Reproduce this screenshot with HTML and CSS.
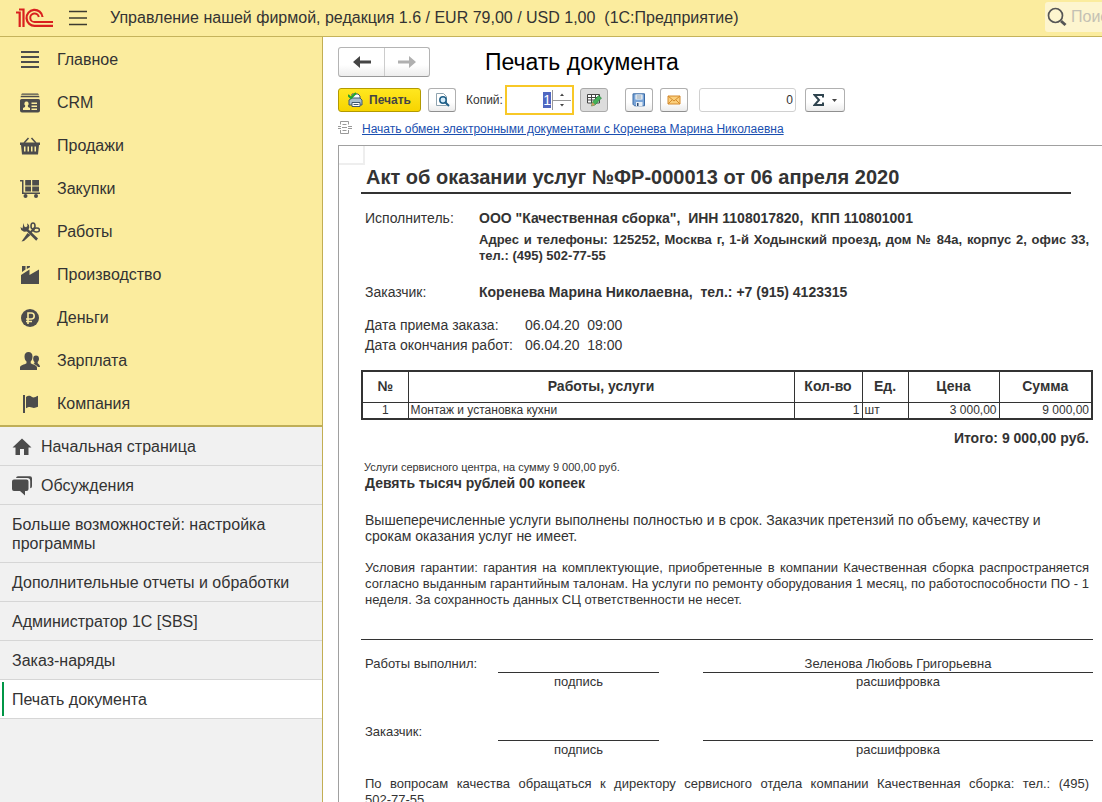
FILE: index.html
```html
<!DOCTYPE html>
<html lang="ru">
<head>
<meta charset="utf-8">
<title>Управление нашей фирмой</title>
<link rel="stylesheet" href="styles.css">
</head>
<body>
<header class="topbar">
  <svg class="logo" width="38" height="20" viewBox="0 0 38 20" fill="none" stroke="#d9201f" role="img" aria-label="1С">
    <path d="M0 4.500H3.700V19M3 1.500H7.500V19" stroke-width="2.200"/>
    <path d="M26.500 9A8 8 0 1 0 19 17.800H37" stroke-width="2.200"/>
    <path d="M22.800 9A4.300 4.300 0 1 0 19 14H37" stroke-width="2"/>
  </svg>
  <button class="menu-btn" aria-label="Меню"><svg width="18" height="16" viewBox="0 0 18 16" stroke="#3c3b30" stroke-width="1.300"><path d="M0 1.500H18M0 8H18M0 14.500H18"/></svg></button>
  <div class="app-title">Управление нашей фирмой, редакция 1.6 / EUR 79,00 / USD 1,00&nbsp; (1С:Предприятие)</div>
  <label class="search">
    <svg width="20" height="20" viewBox="0 0 20 20" fill="none" stroke="#555"><circle cx="8.500" cy="8.500" r="7" stroke-width="1.700"/><path d="M14 14l4.500 4" stroke-width="3"/></svg>
    <input type="text" placeholder="Поиск (Ctrl+Shift+F)" aria-label="Поиск">
  </label>
</header>
<div class="body">
  <aside class="sidebar">
    <nav class="sections">
      <a href="#"><svg viewBox="0 0 20 20"><path d="M1 1h18v2H1zM1 6h18v2H1zM1 11h18v2H1zM1 16h18v2H1z"/></svg>Главное</a>
      <a href="#"><svg viewBox="0 0 20 20"><path d="M2 .5h16l1 1.200H1zM1 2.800h18l.5 1.500H.5z"/><path fill-rule="evenodd" d="M1.500 6h17A1.500 1.500 0 0 1 20 7.500v10a2 2 0 0 1-2 2H2a2 2 0 0 1-2-2v-10A1.500 1.500 0 0 1 1.500 6zM6.500 8.500a2 2.200 0 0 0-1.300 4L5 14l-2 1v2h7v-2l-2-1-.2-1.500a2 2.200 0 0 0-1.300-4zM11.500 9.500V11H17V9.500zM11.500 12.500V14H17v-1.500zM11.500 15.500V17H17v-1.500z"/></svg>CRM</a>
      <a href="#"><svg viewBox="0 0 20 20"><path d="M0 6.500h20V9H0z"/><path d="M4 7L8.500 2M16 7l-4.500-5" fill="none" stroke="#4c4c4c" stroke-width="1.500"/><path fill-rule="evenodd" d="M1 9h18l-1 9.500H2zM4 10.500v5h1.500v-5zM7.500 10.500v5H9v-5zM11 10.500v5h1.500v-5zM14.500 10.500v5H16v-5z"/></svg>Продажи</a>
      <a href="#"><svg viewBox="0 0 20 20"><path d="M0 1h3.500v12.500H20V15H2V2.500H0zM5.200 1H11v5.500H5.200zM12.200 1H19v5.500h-6.800zM5.200 7.500H11v5H5.200zM12.200 7.500H19v5h-6.800z"/><circle cx="5.500" cy="17" r="2"/><circle cx="16" cy="17" r="2"/></svg>Закупки</a>
      <a href="#"><svg viewBox="0 0 20 20"><path d="M3.500 1l.8 3.500 1.700.7L7.500 4 7 1.200 9 3l.3 2.500-.8 2 9.500 8.900-1.800 2.400L7 9.500l-3 .3L1.200 8 .5 5l2 1.500"/><path d="M7.500 11l3 2L4 19l-2.500.5z"/><g fill="none" stroke="#4c4c4c" stroke-width="1.600"><ellipse cx="13" cy="4" rx="2" ry="3"/><ellipse cx="16.500" cy="8" rx="3" ry="2"/><path d="M15 5.500L10 11" stroke-width="2"/></g></svg>Работы</a>
      <a href="#"><svg viewBox="0 0 20 20"><path d="M1 19v-9L9.500 4.500V10L19 4.500V19z"/><path d="M2 1h3.500v3.500L2 7zM6.800 1H10v1.200L6.800 4z"/></svg>Производство</a>
      <a href="#"><svg viewBox="0 0 20 20"><circle cx="10" cy="10" r="9"/><path d="M8 16V5h3.200a3 3 0 0 1 0 6H6M6 13.500h6" fill="none" stroke="#fbec9e" stroke-width="1.600"/></svg>Деньги</a>
      <a href="#"><svg viewBox="0 0 20 20"><path d="M8.500 1c2.500 0 4 1.700 4 4.500 0 2.500-1 4.300-1.800 5v1.700c2 1.500 6.300 1.800 6.300 4.300V19H0v-2.500c0-2.500 4.500-2.800 6.500-4.300v-1.700c-1-.7-2-2.500-2-5C4.500 2.700 6 1 8.500 1z"/><path d="M16 4.500c2 0 3 1.200 3 3.300 0 1.700-.8 2.700-1.300 3.200v1.300c1 1 2.300 1.700 2.300 3.700h-2c-1-1.700-2.600-2-4.500-3.200 1-.5 1-1 1-1.800-.7-.5-1.300-1.500-1.300-3.200 0-2.100.8-3.300 2.800-3.300z"/></svg>Зарплата</a>
      <a href="#"><svg viewBox="0 0 20 20"><path d="M3 1h2v18H3zM6 3c2.500-2 4.500-1 6 0s3.500 0 6-1.200v11c-2.500 1.200-4.500 1.500-6 .7s-3.500-1-6 .8z"/></svg>Компания</a>
    </nav>
    <nav class="windows">
      <a href="#"><svg viewBox="0 0 20 20"><path d="M10 1.500L0.500 10.500H3.500V18H8V12h4v6h4.500v-7.500h3z"/></svg>Начальная страница</a>
      <a href="#"><svg viewBox="0 0 20 20"><path d="M4 2A2 2 0 0 1 6 .3h12A2 2 0 0 1 20 2.300v8a2 2 0 0 1-1.800 2V5a3 3 0 0 0-3-3z"/><path d="M2 3.500h12.500a2 2 0 0 1 2 2v7.500a2 2 0 0 1-2 2H13v4.500L8 15H2a2 2 0 0 1-2-2V5.500a2 2 0 0 1 2-2z"/></svg>Обсуждения</a>
      <a href="#">Больше возможностей: настройка программы</a>
      <a href="#">Дополнительные отчеты и обработки</a>
      <a href="#">Администратор 1С [SBS]</a>
      <a href="#">Заказ-наряды</a>
      <a href="#" class="active" aria-current="page">Печать документа</a>
    </nav>
  </aside>
  <main class="content">
    <div class="heading">
      <div class="history">
        <button aria-label="Назад"><svg width="18" height="12" viewBox="0 0 18 12"><path d="M0 6l7-6v4.500h11v3H7V12z" fill="#444"/></svg></button>
        <button aria-label="Вперед"><svg width="18" height="12" viewBox="0 0 18 12"><path d="M18 6l-7-6v4.500H0v3h11V12z" fill="#b0b0b0"/></svg></button>
      </div>
      <h1>Печать документа</h1>
    </div>
    <div class="toolbar">
      <button class="btn print"><svg width="15" height="16" viewBox="0 0 15 16"><path d="M4 6V2h6l2 2v3" fill="#fff" stroke="#456" /><path d="M1 8l3-2h8l2 2v5H1z" fill="#a9bfd0" stroke="#3f5870"/><path d="M4 10.500h8v4H4z" fill="#fff" stroke="#3f5870"/><path d="M5.500 12.500h5" stroke="#3f5870"/><path d="M0 3l3 3 5-5" fill="none" stroke="#20a330" stroke-width="2"/></svg>Печать</button>
      <button class="btn preview" aria-label="Просмотр"><svg width="15" height="14" viewBox="0 0 15 14"><path d="M1.500.5h7l3 3v9h-10z" fill="#fff" stroke="#90a4b0"/><circle cx="8" cy="7" r="3.200" fill="#d5ecfa" stroke="#1f5f88" stroke-width="1.500"/><path d="M10.500 9.500l3.500 3.500" stroke="#1f5f88" stroke-width="2"/></svg></button>
      <label class="copies-label" for="copies">Копий:</label>
      <div class="copies">
        <input id="copies" type="text" value="1">
        <div class="spin"><button aria-label="Больше"><svg width="4" height="3"><path d="M0 3l2-2.500L4 3z" fill="#444"/></svg></button><button aria-label="Меньше"><svg width="4" height="3"><path d="M0 0l2 2.500L4 0z" fill="#444"/></svg></button></div>
      </div>
      <button class="btn edit" aria-label="Редактирование"><svg width="16" height="14" viewBox="0 0 16 14"><path d="M1 1.500h12v8.500H1z" fill="#fff"/><path d="M1.500 1.500h12v8.500h-12zM1 4.500h12M1 7h12M5.500 1.500V10M9.500 1.500V10" fill="none" stroke="#444"/><path d="M5.500 13l1-4L12.500 2.500 15.500 5 9 12z" fill="#43b058" stroke="#2b803c" stroke-width=".6"/><path d="M5.500 13l1-4L9 12z" fill="#d09a60"/></svg></button>
      <button class="btn save" aria-label="Сохранить"><svg width="14" height="14" viewBox="0 0 14 14"><path d="M1.500.8h11v12h-10l-1.500-1.500V.8z" fill="#7aa5d8" stroke="#3b6ba5"/><path d="M3.500 1.500h7v5h-7z" fill="#fff"/><path d="M4.500 3h5M4.500 5h5" stroke="#7d93a8"/><path d="M4 9h6.500v4H4z" fill="#e8eef5"/><path d="M5 10h1.500v3H5z" fill="#2d4c74"/></svg></button>
      <button class="btn mail" aria-label="Отправить"><svg width="14" height="10" viewBox="0 0 14 10"><path d="M1 1h12v8H1z" fill="#fbcf7c" stroke="#d48a2c"/><path d="M1 1l6 5 6-5M1 9l4-4M13 9L9 5" fill="none" stroke="#d48a2c"/></svg></button>
      <input class="sum-value" type="text" value="0" aria-label="Сумма">
      <button class="btn sum" aria-label="Сумма"><svg width="11" height="12" viewBox="0 0 11 12"><path d="M10 3.500V1H1.500l4.500 5-4.500 5H10V8.500" fill="none" stroke="#2f444f" stroke-width="2"/></svg><svg width="5" height="3"><path d="M0 0h5L2.500 3z" fill="#444"/></svg></button>
    </div>
    <div class="exchange">
      <svg width="14" height="13" viewBox="0 0 14 13" fill="none" stroke="#999"><path d="M2.500 3.500v-3h8v3M2.500 9v3.500h8V9M4.500 3.500h4M4 6.500h5M4.500 9.500h4M0 5.500h3M10 5.500h4M0 7.500h3M10 7.500h4"/></svg>
      <a href="#">Начать обмен электронными документами с Коренева Марина Николаевна</a>
    </div>
    <article class="sheet">
      <div class="corner"></div>
      <h2>Акт об оказании услуг №ФР-000013 от 06 апреля 2020</h2>
      <dl class="parties">
        <dt>Исполнитель:</dt>
        <dd>ООО "Качественная сборка",&nbsp; ИНН 1108017820,&nbsp; КПП 110801001
          <p>Адрес и телефоны: 125252, Москва г, 1-й Ходынский проезд, дом № 84а, корпус 2, офис 33, тел.: (495) 502-77-55</p></dd>
        <dt>Заказчик:</dt>
        <dd>Коренева Марина Николаевна,&nbsp; тел.: +7 (915) 4123315</dd>
      </dl>
      <dl class="dates">
        <dt>Дата приема заказа:</dt><dd>06.04.20&nbsp; 09:00</dd>
        <dt>Дата окончания работ:</dt><dd>06.04.20&nbsp; 18:00</dd>
      </dl>
      <table class="services">
        <colgroup><col class="c-num"><col><col class="c-qty"><col class="c-unit"><col class="c-price"><col class="c-total"></colgroup>
        <thead><tr><th>№</th><th>Работы, услуги</th><th>Кол-во</th><th>Ед.</th><th>Цена</th><th>Сумма</th></tr></thead>
        <tbody><tr><td class="center">1</td><td>Монтаж и установка кухни</td><td class="right">1</td><td>шт</td><td class="right">3 000,00</td><td class="right">9 000,00</td></tr></tbody>
      </table>
      <p class="total">Итого: 9 000,00 руб.</p>
      <p class="summary">Услуги сервисного центра, на сумму 9 000,00 руб.</p>
      <p class="words">Девять тысяч рублей 00 копеек</p>
      <p class="accept">Вышеперечисленные услуги выполнены полностью и в срок. Заказчик претензий по объему, качеству и срокам оказания услуг не имеет.</p>
      <p class="terms">Условия гарантии: гарантия на комплектующие, приобретенные в компании Качественная сборка распространяется согласно выданным гарантийным талонам. На услуги по ремонту оборудования 1 месяц, по работоспособности ПО - 1 неделя. За сохранность данных СЦ ответственности не несет.</p>
      <div class="signatures">
        <div class="sign"><span>Работы выполнил:</span><span class="line"></span><span class="line">Зеленова Любовь Григорьевна</span><small class="cap1">подпись</small><small class="cap2">расшифровка</small></div>
        <div class="sign"><span>Заказчик:</span><span class="line"></span><span class="line"></span><small class="cap1">подпись</small><small class="cap2">расшифровка</small></div>
      </div>
      <p class="terms">По вопросам качества обращаться к директору сервисного отдела компании Качественная сборка: тел.: (495) <span class="phone">502-77-55</span></p>
    </article>
  </main>
</div>
<script src="script.js"></script>
</body>
</html>
```

FILE: styles.css
```css
* { box-sizing: border-box; }
body {
  margin: 0;
  height: 100vh;
  display: flex;
  flex-direction: column;
  overflow: hidden;
  background: #fff;
  color: #333;
  font-family: "Liberation Sans", Arial, sans-serif;
  font-size: 16px;
}
button, input { font-family: inherit; color: inherit; }
svg { display: block; flex: none; }
h1, h2, p, dl, dd { margin: 0; }
a { color: inherit; text-decoration: none; }

.topbar {
  flex: none;
  display: flex;
  align-items: center;
  height: 37px;
  padding-left: 16px;
  background: #fbec9e;
  border-bottom: 1px solid #c5b35b;
}
.menu-btn { margin-left: 15px; padding: 0; border: 0; background: none; }
.app-title { flex: 1; margin-left: 23px; white-space: nowrap; overflow: hidden; }
.search {
  display: flex;
  align-items: center;
  gap: 4px;
  width: 57px;
  height: 30px;
  margin-bottom: 2px;
  padding-left: 2px;
  background: #fdf5cf;
  border-radius: 3px 0 0 3px;
}
.search input {
  flex: 1;
  min-width: 0;
  padding: 0;
  border: 0;
  outline: 0;
  background: none;
  font-size: 16px;
}
.search input::placeholder { color: #c4c1b4; }

.body { flex: 1; min-height: 0; display: flex; }
.sidebar {
  flex: none;
  width: 323px;
  background: #f1f1f1;
  border-right: 1px solid #c2ae54;
}
.sections { padding-top: 1px; background: #fbec9e; border-bottom: 2px solid #bfae57; }
.sections a {
  display: flex;
  align-items: center;
  gap: 17px;
  height: 43px;
  padding-left: 20px;
}
.sidebar svg { width: 20px; height: 20px; margin: -1px 0; fill: #4c4c4c; }
.windows a {
  display: flex;
  align-items: center;
  gap: 9px;
  min-height: 39px;
  padding: 10px 20px 9px 12px;
  line-height: 19px;
  border-bottom: 1px solid #d6d6d6;
}
.windows a.active { background: linear-gradient(#009646, #009646) 2px center / 2px 34px no-repeat #fff; }

.content { flex: 1; min-width: 0; padding: 10px 0 0 15px; display: flex; flex-direction: column; }
.heading { display: flex; align-items: center; gap: 55px; height: 30px; }
.history {
  display: flex;
  height: 30px;
  border: 1px solid #b4b4b4;
  border-bottom-color: #999;
  border-radius: 3px;
  background: linear-gradient(#fff 60%, #ededed);
}
.history button {
  display: flex;
  align-items: center;
  justify-content: center;
  width: 45px;
  padding: 0;
  border: 0;
  background: none;
}
.history button + button { border-left: 1px solid #ccc; }
h1 { font-size: 23px; font-weight: 400; line-height: 30px; color: #000; }

.toolbar { display: flex; align-items: center; height: 30px; margin-top: 8px; font-size: 12px; }
.btn {
  display: flex;
  align-items: center;
  justify-content: center;
  flex: none;
  width: 28px;
  height: 24px;
  padding: 0;
  border: 1px solid #b0b0b0;
  border-bottom-color: #8f8f8f;
  border-radius: 3px;
  background: linear-gradient(#fff 60%, #ececec);
}
.print {
  width: 83px;
  gap: 6px;
  border-color: #b39a00;
  background: linear-gradient(#ffe720, #f7d400);
  font-size: 12px;
  font-weight: 700;
  color: #444;
}
.preview { margin-left: 7px; }
.copies-label { width: 39px; margin-left: 10px; }
.copies {
  display: flex;
  width: 69px;
  height: 30px;
  border: 2px solid #f8c827;
}
.copies input {
  flex: 1;
  min-width: 0;
  padding: 0 1px 0 0;
  border: 0;
  outline: 0;
  font-size: 14px;
  text-align: right;
}
.copies input::selection { background: #5067c1; color: #fff; }
.spin { width: 19px; margin: 3px 1px 3px 0; border-left: 1px solid #999; display: flex; flex-direction: column; }
.spin button {
  flex: 1;
  display: flex;
  align-items: center;
  justify-content: center;
  padding: 0;
  border: 0;
  background: none;
}
.spin button + button { border-top: 1px solid #999; }
.edit { margin-left: 6px; background: #dcdcdc; border-color: #aaa; }
.save { margin-left: 17px; }
.mail { margin-left: 7px; }
.sum-value {
  width: 97px;
  height: 24px;
  margin-left: 11px;
  padding: 0 2px;
  border: 1px solid #d0d0d0;
  border-radius: 3px;
  font-size: 12px;
  text-align: right;
}
.sum { width: 40px; margin-left: 9px; gap: 8px; }

.exchange { display: flex; align-items: center; gap: 10px; height: 28px; font-size: 12px; color: #1a4fb0; }
.exchange a { text-decoration: underline; }
.exchange svg { margin-bottom: 3px; }

.sheet {
  flex: 1;
  min-height: 0;
  padding: 0 9px 0 22px;
  border: solid #a0a0a0;
  border-width: 1px 0 0 1px;
  margin-top: 2px;
  overflow: hidden;
}
.corner { width: 26px; height: 19px; margin-left: -22px; border: solid #eee; border-width: 0 2px 2px 0; }
h2 {
  margin-right: 22px;
  padding-left: 5px;
  font-size: 20px;
  line-height: 24px;
  height: 29px;
  border-bottom: 2px solid #333;
}
.parties {
  display: grid;
  grid-template-columns: 114px 1fr;
  row-gap: 19px;
  padding: 15px 4px 0;
  font-size: 14px;
  line-height: 18px;
}
.parties dd { font-weight: 700; }
.parties p { margin-top: 5px; font-size: 13px; line-height: 16px; text-align: justify; }
.dates {
  display: grid;
  grid-template-columns: 160px 1fr;
  padding: 14px 0 0 4px;
  font-size: 14px;
  line-height: 20px;
  white-space: nowrap;
}
.services {
  width: 100%;
  margin-top: 15px;
  table-layout: fixed;
  border-collapse: collapse;
  border: 2px solid #333;
  font-size: 12px;
}
.services th, .services td { border: 1px solid #333; }
.services th { height: 31px; padding: 0 0 2px; font-size: 14px; }
.services td { height: 17px; padding: 0 2px; line-height: 15px; }
.c-num, .c-unit { width: 46px; }
.c-qty { width: 68px; }
.c-price { width: 91px; }
.c-total { width: 93px; }
.services .center { text-align: center; }
.services .right { text-align: right; }
.total { padding: 9px 4px 0; font-size: 14px; font-weight: 700; line-height: 18px; text-align: right; }
.summary { padding: 13px 3px 0; font-size: 11px; line-height: 14px; }
.words { padding: 0 4px; font-size: 14px; font-weight: 700; line-height: 18px; }
.accept { padding: 20px 4px 0; font-size: 14px; line-height: 16px; }
.terms { padding: 16px 4px 0; font-size: 13px; line-height: 16px; text-align: justify; }
.phone { white-space: nowrap; }
.signatures { margin-top: 31px; padding-top: 16px; border-top: 1px solid #333; }
.sign {
  display: grid;
  grid-template-columns: 133px 161px 1fr;
  grid-template-rows: 17px 17px;
  padding-left: 4px;
  font-size: 13px;
  line-height: 16px;
}
.sign + .sign { margin-top: 34px; }
.line { border-bottom: 1px solid #333; text-align: center; }
.line + .line { margin-left: 44px; }
.sign small { font-size: 13px; line-height: 18px; text-align: center; }
.cap1 { grid-column: 2; }
.cap2 { grid-column: 3; margin-left: 44px; }
.signatures + .terms { padding-top: 18px; }
```

FILE: script.js
```js
const copies = document.getElementById("copies");
copies.focus();
copies.select();
```
